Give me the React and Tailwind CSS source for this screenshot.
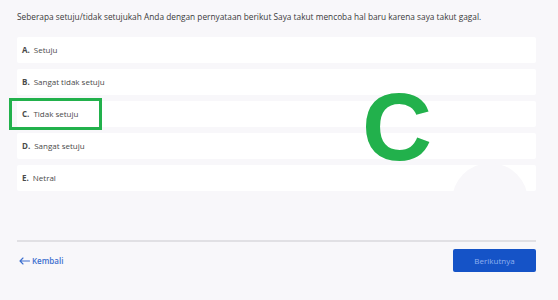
import React from 'react';

const options = [
  { key: 'A', label: 'Setuju' },
  { key: 'B', label: 'Sangat tidak setuju' },
  { key: 'C', label: 'Tidak setuju' },
  { key: 'D', label: 'Sangat setuju' },
  { key: 'E', label: 'Netral' },
];

export default function App() {
  return (
    <div
      className="relative w-[558px] h-[300px] overflow-hidden bg-[#f8f7fa] text-[#3a3a3a]"
      style={{ fontFamily: '"Open Sans", "Noto Sans", sans-serif' }}
    >
      <div className="pl-[17px] pr-[22px] pt-[12px]">
        <p className="text-[8.3px] leading-[10px] h-[10px] whitespace-nowrap">
          Seberapa setuju/tidak setujukah Anda dengan pernyataan berikut Saya takut mencoba hal baru karena saya takut gagal.
        </p>

        <div className="mt-[15px] flex flex-col gap-[6px]">
          {options.map((o) => (
            <div key={o.key} className="h-[26px] bg-white rounded-[2px] flex items-center pl-[5px] text-[8px] text-[#4a4a4a]">
              <span className="font-bold mr-[4px]">{o.key}.</span>
              <span>{o.label}</span>
            </div>
          ))}
        </div>

        <div className="mt-[49px] h-[2px] bg-[#e1e0e4]" />

        <div className="mt-[7px] flex items-center justify-between">
          <button className="flex items-center gap-[2px] text-[8px] font-semibold text-[#3d6fcf] pl-[2px]">
            <svg width="11" height="8" viewBox="0 0 11 8" fill="none" stroke="currentColor" strokeWidth="1.1" strokeLinecap="round" strokeLinejoin="round">
              <path d="M10.5 4H1M4 1L1 4l3 3" />
            </svg>
            <span>Kembali</span>
          </button>
          <button className="w-[83px] h-[23px] rounded-[2px] bg-[#1553c7] text-[8px] text-[#8fb0f0]">
            Berikutnya
          </button>
        </div>
      </div>

      {/* annotation overlays */}
      <div className="absolute left-[452px] top-[163px] w-[76px] h-[76px] rounded-full bg-[#f8f7fa]" />
      <div className="absolute left-[9px] top-[98px] w-[93px] h-[32px] border-[3px] border-[#22b14c]" />
      <div
        className="absolute left-[362px] top-[78px] text-[97px] leading-none font-bold text-[#22b14c]"
        style={{ fontFamily: '"Liberation Sans", Arial, sans-serif' }}
      >
        C
      </div>
    </div>
  );
}
